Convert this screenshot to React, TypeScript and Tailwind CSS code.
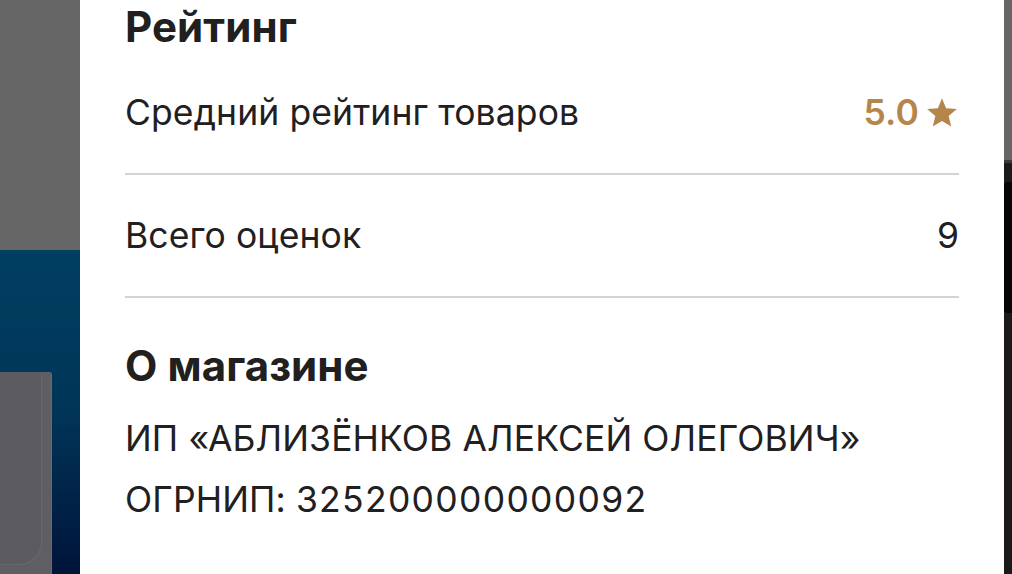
import React from "react"

const font = { fontFamily: "Inter, 'Noto Sans', sans-serif" }

function Star() {
  return (
    <svg viewBox="0 0 24 24" className="h-[34px] w-[34px]" fill="#b5864b">
      <polygon points="12,1.5 14.9,8.6 22.5,9.2 16.7,14.2 18.5,21.6 12,17.6 5.5,21.6 7.3,14.2 1.5,9.2 9.1,8.6" />
    </svg>
  )
}

function Row({ label, children }: { label: string; children: React.ReactNode }) {
  return (
    <div className="flex h-[123px] items-center justify-between border-b-2 border-[#d4d4d4]">
      <span>{label}</span>
      {children}
    </div>
  )
}

export default function App() {
  return (
    <div className="flex h-[574px] w-[1012px] overflow-hidden text-[#21201f]" style={font}>
      {/* dimmed page behind the sheet */}
      <div className="flex w-[80px] shrink-0 flex-col">
        <div className="h-[250px] bg-[#666666]" />
        <div className="flex flex-1 flex-col bg-gradient-to-b from-[#003f60] via-[#003558] to-[#00143a] pt-[122px]">
          <div className="flex h-full w-[51px] rounded-tr-[3px] bg-[#5f5f63] pr-[10px] pb-[10px] shadow-[1px_0_0_#6a6a6e]">
            <div className="h-full w-full rounded-br-[22px] bg-[#5c5b60] shadow-[1px_1px_0_#68676c]" />
          </div>
        </div>
      </div>

      {/* seller sheet */}
      <div className="flex-1 bg-white px-[45px] text-[35.5px] leading-none tracking-[0.1px]">
        <h2 className="flex h-[52px] items-start pt-[6px] text-[42px] font-bold">Рейтинг</h2>
        <Row label="Средний рейтинг товаров">
          <span className="flex items-center gap-[6px] font-semibold text-[#b5864b]">
            5.0
            <Star />
          </span>
        </Row>
        <Row label="Всего оценок">
          <span>9</span>
        </Row>
        <h2 className="flex h-[110px] items-center pt-[26px] text-[42px] font-bold">О магазине</h2>
        <div className="leading-[61px]">
          <p>ИП «АБЛИЗЁНКОВ АЛЕКСЕЙ ОЛЕГОВИЧ»</p>
          <p>
            ОГРНИП: <span className="tracking-[1.3px]">325200000000092</span>
          </p>
        </div>
      </div>

      {/* edge of the next panel */}
      <div className="flex w-[8px] shrink-0 flex-col bg-[#1a1a1a]">
        <div className="h-[160px] bg-[#666666]" />
        <div className="h-[3px] bg-[#3a3a3a]" />
        <div className="mt-[19px] h-[131px] rounded-tl-[4px] rounded-bl-[4px] bg-[#060606]" />
      </div>
    </div>
  )
}
